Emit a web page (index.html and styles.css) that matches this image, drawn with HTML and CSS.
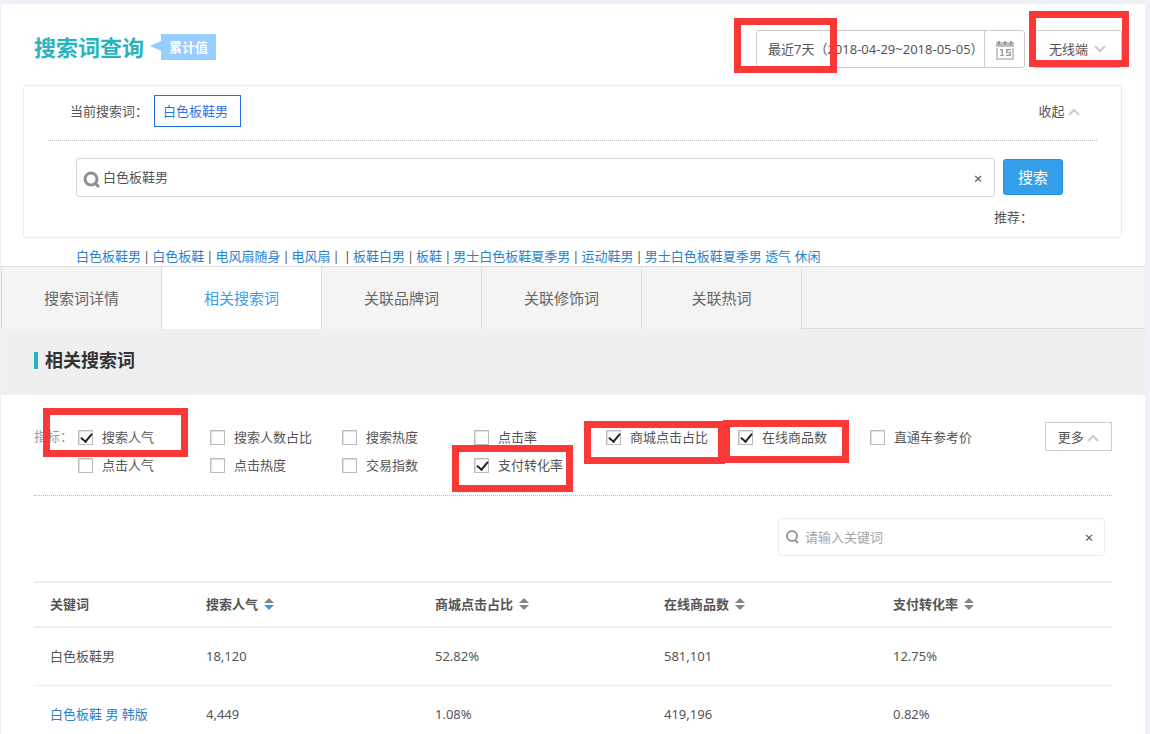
FILE: index.html
```
<!DOCTYPE html>
<html lang="zh-CN">
<head>
  <meta charset="UTF-8">
  <meta name="viewport" content="width=device-width, initial-scale=1.0">
  <title>搜索词查询</title>
  <link rel="stylesheet" href="styles.css">
</head>
<body>
  <div class="page">
    <header class="header">
      <div class="header-left">
        <h1>搜索词查询</h1>
        <span class="badge">累计值</span>
      </div>
      <div class="header-right">
        <div class="date-picker">
          <input type="text" class="date-input" aria-label="日期范围" value="最近7天（2018-04-29~2018-05-05）" readonly>
          <button type="button" class="date-button" aria-label="选择日期">
            <svg width="18" height="19" viewBox="0 0 18 19">
              <path fill="#bdbdbd" d="M0 1h2v3h2V1h4v3h2V1h4v3h2V1h2v5H0z"/>
              <path fill="#999" d="M2 0h2v4H2zM8 0h2v4H8zM14 0h2v4h-2z"/>
              <path fill="none" stroke="#c8c8c8" stroke-width="2" d="M1 7v11h16V7"/>
              <path fill="#a0a0a0" d="M4 8h3v6h1v1H4v-1h1.500V9.500H4zM10 8h5v1.500h-3.500V11H15v4h-5v-1.500h3.500v-1.500H10z"/>
            </svg>
          </button>
          <span class="mark mark-date"></span>
        </div>
        <div class="device">
          <select aria-label="终端">
            <option>无线端</option>
          </select>
          <svg class="chevron" width="12" height="8" viewBox="0 0 12 8"><path d="M1 1l5 5 5-5"/></svg>
          <span class="mark mark-device"></span>
        </div>
      </div>
    </header>

    <section class="search-card">
      <div class="current">
        <span>当前搜索词：</span>
        <a href="#" class="chip">白色板鞋男</a>
        <button type="button" class="collapse">收起
          <svg class="chevron" width="12" height="8" viewBox="0 0 12 8"><path d="M1 7l5-5 5 5"/></svg>
        </button>
      </div>
      <form class="search-form">
        <div class="search-box">
          <svg class="search-icon" width="17" height="17" viewBox="0 0 17 17"><circle cx="8" cy="8" r="6"/><path d="M12 12l4 4"/></svg>
          <input type="text" aria-label="搜索词" value="白色板鞋男">
          <button type="button" class="clear" aria-label="清空">×</button>
        </div>
        <button type="button" class="search-button">搜索</button>
      </form>
      <p class="recommend">推荐：</p>
    </section>

    <div class="history">
      <a href="#">白色板鞋男</a><i>|</i><a href="#">白色板鞋</a><i>|</i><a href="#">电风扇随身</a><i>|</i><a href="#">电风扇</a><i>|</i><i>|</i><a href="#">板鞋白男</a><i>|</i><a href="#">板鞋</a><i>|</i><a href="#">男士白色板鞋夏季男</a><i>|</i><a href="#">运动鞋男</a><i>|</i><a href="#">男士白色板鞋夏季男 透气 休闲</a>
    </div>

    <nav class="tabs">
      <a href="#">搜索词详情</a>
      <a href="#" class="active">相关搜索词</a>
      <a href="#">关联品牌词</a>
      <a href="#">关联修饰词</a>
      <a href="#">关联热词</a>
    </nav>

    <div class="section-title">
      <h2>相关搜索词</h2>
    </div>

    <main class="content">
      <div class="metrics">
        <span class="metrics-label">指标：</span>
        <div class="metrics-list">
          <label><input type="checkbox" checked>搜索人气<span class="mark mark-popular"></span></label>
          <label><input type="checkbox">搜索人数占比</label>
          <label><input type="checkbox">搜索热度</label>
          <label><input type="checkbox">点击率</label>
          <label><input type="checkbox" checked>商城点击占比<span class="mark mark-mall"></span></label>
          <label><input type="checkbox" checked>在线商品数<span class="mark mark-goods"></span></label>
          <label><input type="checkbox">直通车参考价</label>
          <label><input type="checkbox">点击人气</label>
          <label><input type="checkbox">点击热度</label>
          <label><input type="checkbox">交易指数</label>
          <label><input type="checkbox" checked>支付转化率<span class="mark mark-pay"></span></label>
        </div>
        <button type="button" class="more">更多
          <svg class="chevron" width="12" height="8" viewBox="0 0 12 8"><path d="M1 7l5-5 5 5"/></svg>
        </button>
      </div>

      <div class="filter">
        <svg class="filter-icon" width="14" height="14" viewBox="0 0 14 14"><circle cx="6" cy="6" r="5"/><path d="M9 10l3 3"/></svg>
        <input type="text" aria-label="关键词" placeholder="请输入关键词">
        <button type="button" class="clear" aria-label="清空">×</button>
      </div>

      <table class="words">
        <thead>
          <tr>
            <th>关键词</th>
            <th>搜索人气<svg class="sort sort-desc" width="10" height="12" viewBox="0 0 10 12"><path d="M0 5l5-5 5 5z"/><path class="down" d="M0 7h10l-5 5z"/></svg></th>
            <th>商城点击占比<svg class="sort" width="10" height="12" viewBox="0 0 10 12"><path d="M0 5l5-5 5 5z"/><path class="down" d="M0 7h10l-5 5z"/></svg></th>
            <th>在线商品数<svg class="sort" width="10" height="12" viewBox="0 0 10 12"><path d="M0 5l5-5 5 5z"/><path class="down" d="M0 7h10l-5 5z"/></svg></th>
            <th>支付转化率<svg class="sort" width="10" height="12" viewBox="0 0 10 12"><path d="M0 5l5-5 5 5z"/><path class="down" d="M0 7h10l-5 5z"/></svg></th>
          </tr>
        </thead>
        <tbody>
          <tr>
            <td>白色板鞋男</td>
            <td>18,120</td>
            <td>52.82%</td>
            <td>581,101</td>
            <td>12.75%</td>
          </tr>
          <tr>
            <td><a href="#">白色板鞋 男 韩版</a></td>
            <td>4,449</td>
            <td>1.08%</td>
            <td>419,196</td>
            <td>0.82%</td>
          </tr>
        </tbody>
      </table>
    </main>
  </div>
</body>
</html>
```

FILE: styles.css
```
* {
  box-sizing: border-box;
}

body {
  margin: 0;
  padding: 4px 5px 0 1px;
  background: #eef1f7;
  color: #555;
  font-family: "Noto Sans", "Noto Sans CJK SC", sans-serif;
  font-size: 13px;
  line-height: 20px;
}

h1, h2, p {
  margin: 0;
}

a {
  color: #2a82cf;
  text-decoration: none;
}

button, input, select {
  margin: 0;
  padding: 0;
  border: 0;
  background: none;
  color: inherit;
  font: inherit;
  outline: none;
}

.page {
  background: #fff;
}

.chevron {
  fill: none;
  stroke: #ccc;
  stroke-width: 2;
}

/* Red highlight frames */
.mark {
  position: absolute;
  z-index: 2;
  border: 7px solid #fb3838;
  pointer-events: none;
}

/* Header */
.header {
  display: flex;
  justify-content: space-between;
  align-items: flex-start;
  padding: 26px 23px 17px 33px;
}

.header-left {
  display: flex;
  align-items: center;
}

h1 {
  color: #26b5bf;
  font-size: 22px;
  line-height: 34px;
}

.badge {
  position: relative;
  margin-left: 17px;
  padding: 0 8px;
  background: #9cf;
  color: #fff;
  font-weight: bold;
  line-height: 26px;
}

.badge::before {
  content: '';
  position: absolute;
  right: 100%;
  top: 7px;
  border: 5px solid transparent;
  border-left-width: 0;
  border-right: 11px solid #9cf;
}

.header-right {
  display: flex;
  gap: 8px;
}

.date-picker {
  position: relative;
  display: flex;
  height: 38px;
  border: 1px solid #ccc;
  border-radius: 3px;
}

.date-input {
  width: 227px;
  padding-left: 11px;
}

.date-button {
  display: flex;
  align-items: center;
  justify-content: center;
  width: 40px;
  padding-top: 3px;
  border-left: 1px solid #ccc;
}

.mark-date {
  top: -13px;
  left: -23px;
  width: 103px;
  height: 55px;
}

.device {
  position: relative;
  display: flex;
  align-items: center;
  height: 38px;
  padding: 0 15px;
  border: 1px solid #ccc;
  border-radius: 3px;
}

.device select {
  width: 45px;
  appearance: none;
}

.mark-device {
  top: -20px;
  left: -5px;
  width: 100px;
  height: 56px;
}

/* Search card */
.search-card {
  margin: 0 23px 0 22px;
  padding: 9px 24px 10px;
  border: 1px solid #ebebeb;
  border-radius: 3px;
}

.current {
  display: flex;
  align-items: center;
  padding: 0 17px 13px 22px;
  border-bottom: 1px dotted #bbb;
}

.chip {
  margin-left: 6px;
  padding: 0 12px 0 8px;
  border: 1px solid #1f6fe5;
  color: #2f73ea;
  line-height: 30px;
}

.collapse {
  margin-left: auto;
}

.search-form {
  display: flex;
  align-items: flex-start;
  gap: 8px;
  padding: 17px 34px 0 28px;
}

.search-box {
  display: flex;
  flex: 1;
  align-items: center;
  height: 39px;
  padding: 0 11px 0 6px;
  border: 1px solid #d5d5d5;
  border-radius: 3px;
}

.search-icon {
  margin-top: 4px;
  fill: none;
  stroke: #909090;
  stroke-width: 3;
}

.search-box input {
  flex: 1;
  padding: 0 0 2px 3px;
}

.clear {
  width: 10px;
  font-size: 15px;
}

.search-button {
  width: 60px;
  height: 36px;
  margin-top: 1px;
  border: 1px solid #2390e0;
  border-radius: 3px;
  background: #359ee8;
  color: #fff;
  font-size: 15px;
}

.recommend {
  padding: 10px 64px 0 0;
  text-align: right;
}

/* Search history */
.history {
  padding: 8px 75px 0;
}

.history i {
  padding: 0 2px;
  font-style: normal;
}

/* Tabs */
.tabs {
  display: flex;
  border: 1px solid #ddd;
  border-right: 0;
  background: #f4f4f4;
}

.tabs a {
  width: 160px;
  margin-bottom: -1px;
  border-right: 1px solid #ddd;
  background: #f4f4f4;
  color: #666;
  font-size: 15px;
  line-height: 62px;
  text-align: center;
}

.tabs .active {
  background: #fff;
  color: #3a9ee8;
}

.section-title {
  padding: 20px 33px 24px;
  background: #efefef;
}

h2 {
  display: flex;
  align-items: center;
  gap: 7px;
  color: #333;
  font-size: 18px;
  line-height: 22px;
}

h2::before {
  content: '';
  width: 4px;
  height: 17px;
  background: #26b5bf;
}

/* Metrics */
.content {
  padding: 27px 33px 0;
}

.metrics {
  display: flex;
  align-items: flex-start;
  padding-bottom: 16px;
  border-bottom: 1px dotted #bbb;
}

.metrics-label {
  width: 44px;
  color: #999;
  line-height: 28px;
}

.metrics-list {
  display: grid;
  flex: 1;
  grid-template-columns: repeat(7, 132px);
  margin-top: 1px;
}

.metrics-list label {
  position: relative;
  display: flex;
  align-items: center;
  height: 28px;
}

.metrics-list input {
  width: 15px;
  height: 15px;
  margin-right: 9px;
  border: 1px solid #bbb;
  background: #fff;
  box-shadow: inset 1px 1px 1px #ddd;
  appearance: none;
}

.metrics-list input:checked::before {
  content: '';
  display: block;
  width: 5px;
  height: 9px;
  margin-left: 4px;
  border: solid #222;
  border-width: 0 2px 2px 0;
  transform: rotate(40deg);
}

.mark-popular {
  top: -15px;
  left: -35px;
  width: 145px;
  height: 49px;
}

.mark-mall {
  top: -2px;
  left: -22px;
  width: 141px;
  height: 43px;
}

.mark-goods {
  top: -3px;
  left: -15px;
  width: 126px;
  height: 43px;
}

.mark-pay {
  top: -6px;
  left: -22px;
  width: 121px;
  height: 47px;
}

.more {
  width: 67px;
  height: 29px;
  border: 1px solid #ccc;
}

/* Keyword filter */
.filter {
  display: flex;
  align-items: center;
  width: 327px;
  height: 38px;
  margin: 22px 7px 25px auto;
  padding: 0 10px 0 7px;
  border: 1px solid #ebebeb;
  border-radius: 4px;
}

.filter-icon {
  fill: none;
  stroke: #999;
  stroke-width: 2;
}

.filter input {
  flex: 1;
  padding-left: 5px;
}

.filter input::placeholder {
  color: #a5a5a5;
}

/* Keyword table */
.words {
  width: 100%;
  border-collapse: separate;
  border-spacing: 0;
  table-layout: fixed;
}

.words th, .words td {
  padding: 0 16px 2px;
  text-align: left;
}

.words th {
  width: 229px;
  height: 47px;
  border: solid #ededed;
  border-width: 2px 0;
}

.words th:first-child {
  width: 156px;
}

.words th:last-child {
  width: auto;
}

.words td {
  height: 58px;
  border-bottom: 1px solid #ebebeb;
}

.sort {
  margin-left: 6px;
  fill: #858585;
  vertical-align: -1px;
}

.sort-desc .down {
  fill: #3b97ee;
}
```
